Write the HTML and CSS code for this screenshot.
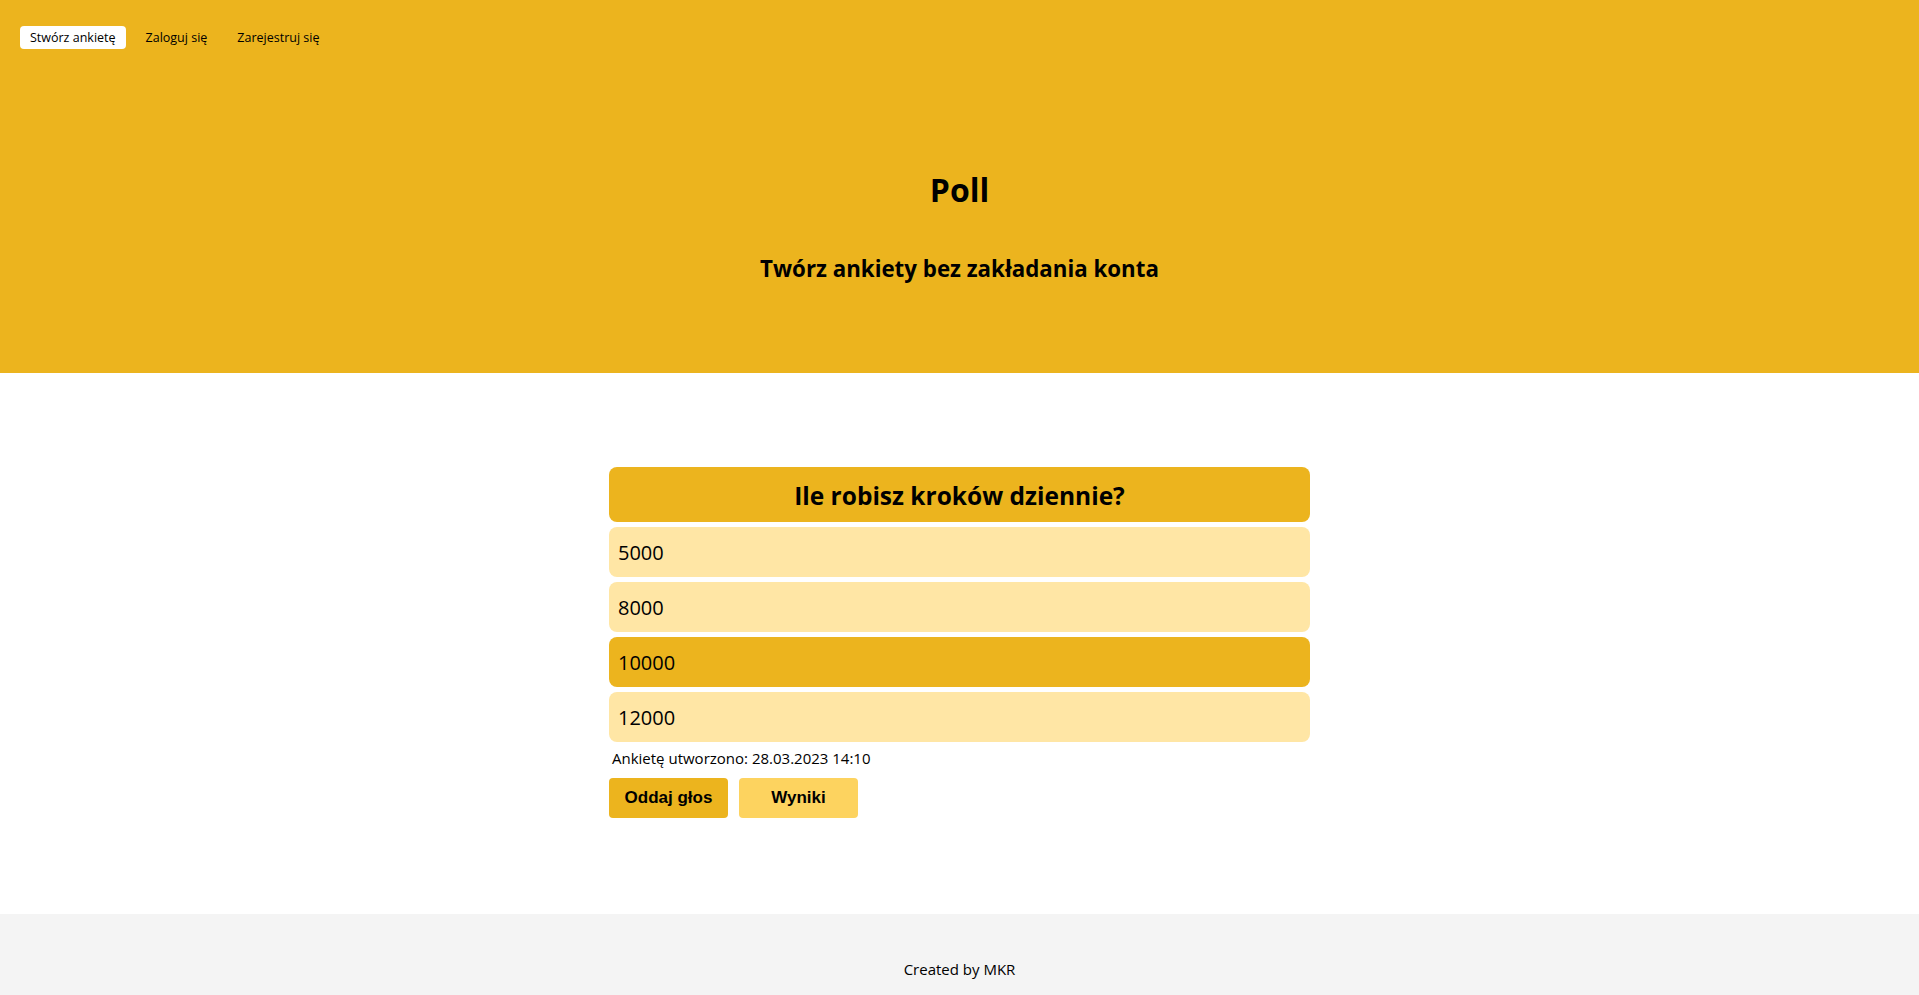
FILE: index.html
```html
<!DOCTYPE html>
<html lang="pl">
<head>
<meta charset="utf-8">
<title>Poll</title>
<link rel="stylesheet" href="styles.css">
</head>
<body>
<header class="hero">
  <nav class="nav">
    <a class="nav-item active" href="#">Stwórz ankietę</a>
    <a class="nav-item" href="#">Zaloguj się</a>
    <a class="nav-item" href="#">Zarejestruj się</a>
  </nav>
  <h1 class="hero-title">Poll</h1>
  <h2 class="hero-sub">Twórz ankiety bez zakładania konta</h2>
</header>
<main class="main">
  <section class="poll">
    <div class="poll-question">Ile robisz kroków dziennie?</div>
    <div class="poll-option">5000</div>
    <div class="poll-option">8000</div>
    <div class="poll-option selected">10000</div>
    <div class="poll-option">12000</div>
    <p class="poll-date">Ankietę utworzono: 28.03.2023 14:10</p>
    <div class="poll-actions">
      <button class="btn btn-vote">Oddaj głos</button>
      <button class="btn btn-results">Wyniki</button>
    </div>
  </section>
</main>
<footer class="footer">Created by MKR</footer>
</body>
</html>
```
FILE: styles.css
```css
* { box-sizing: border-box; }
html, body { margin: 0; padding: 0; }
body {
  font-family: "Open Sans", "Noto Sans", sans-serif;
  color: #000;
  background: #fff;
  min-height: 995px;
  display: flex;
  flex-direction: column;
}
.hero {
  background: #ecb41e;
  height: 373px;
  padding: 26px 20px 0;
  display: flex;
  flex-direction: column;
}
.nav {
  display: flex;
  gap: 10px;
}
.nav-item {
  display: block;
  height: 23px;
  line-height: 23px;
  padding: 0 10px;
  font-size: 12.5px;
  color: #000;
  text-decoration: none;
  border-radius: 4px;
}
.nav-item.active { background: #fff; }
.hero-title {
  margin: 121px 0 0;
  text-align: center;
  font-size: 32px;
  line-height: 40px;
  font-weight: 700;
}
.hero-sub {
  margin: 43px 0 0;
  text-align: center;
  font-size: 22.3px;
  line-height: 32px;
  font-weight: 700;
}
.main {
  flex: 1;
  display: flex;
  justify-content: center;
  padding-top: 94px;
}
.poll {
  width: 701px;
  display: flex;
  flex-direction: column;
  gap: 5px;
}
.poll-question {
  height: 55px;
  background: #ecb41e;
  border-radius: 8px;
  text-align: center;
  font-size: 24.5px;
  line-height: 57px;
  font-weight: 700;
}
.poll-option {
  height: 50px;
  background: #ffe6a5;
  border-radius: 8px;
  padding-left: 9px;
  font-size: 20px;
  line-height: 52px;
}
.poll-option.selected { background: #ecb41e; }
.poll-date {
  margin: 1px 0 0 3px;
  font-size: 15px;
  line-height: 20px;
}
.poll-actions {
  display: flex;
  gap: 11px;
  margin-top: 5px;
}
.btn {
  width: 119px;
  height: 40px;
  border: 0;
  border-radius: 4px;
  font-family: "Liberation Sans", Arial, sans-serif;
  font-size: 17px;
  font-weight: 700;
  color: #000;
  cursor: pointer;
}
.btn-vote { background: #ecb41e; }
.btn-results { background: #fdd35f; }
.footer {
  height: 81px;
  background: #f4f4f4;
  text-align: center;
  font-size: 15px;
  padding-top: 44px;
  line-height: 22px;
}
```
